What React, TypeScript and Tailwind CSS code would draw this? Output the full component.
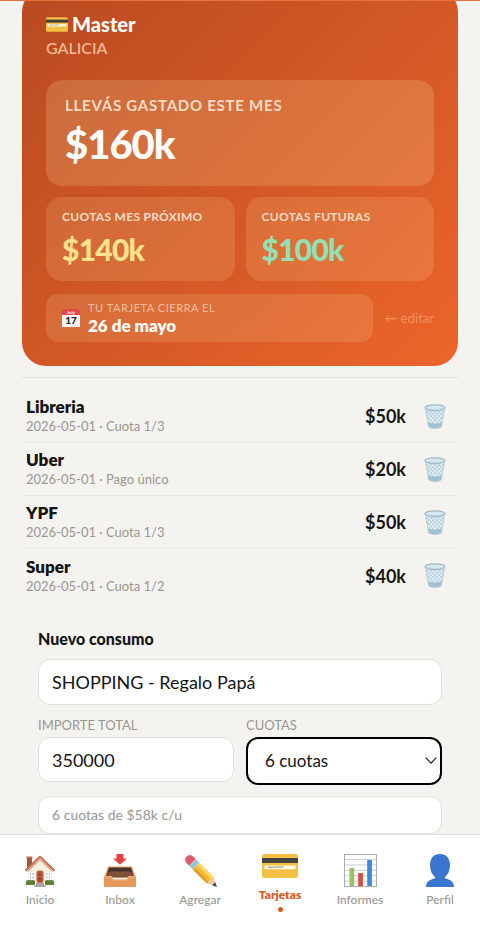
import { useState, type ReactNode } from "react";

function CardIcon({ className }: { className: string }) {
  return (
    <svg viewBox="0 0 36 24" className={className} aria-hidden="true">
      <rect width="36" height="24" rx="2.5" fill="#f2c043" />
      <rect y="4" width="36" height="5" fill="#45413c" />
      <rect x="2.5" y="11.5" width="31" height="3.8" fill="#fff8e3" />
      <path d="M6 14l2-1.5.8 1.5 2-1.2 1 .8 2-1 1 .9 2.200-.9 1.500.6 3-.4" fill="none" stroke="#4d473b" strokeWidth=".6" />
    </svg>
  );
}

function CalendarIcon() {
  return (
    <svg viewBox="0 0 18 18" className="size-[18px] shrink-0" aria-hidden="true">
      <rect width="18" height="18" rx="1" fill="#fbfaf8" />
      <path d="M1 0h16a1 1 0 0 1 1 1v5H0V1a1 1 0 0 1 1-1z" fill="#e5484a" />
      <text x="9" y="4.600" textAnchor="middle" fontSize="4.500" fontWeight="700" fill="#ffffff">July</text>
      <text x="9" y="15" textAnchor="middle" fontSize="10" fontWeight="900" fill="#1d1d1d">17</text>
    </svg>
  );
}

function TrashIcon() {
  return (
    <svg viewBox="0 0 22 25" className="h-[25px] w-[22px]" aria-hidden="true">
      <path d="M1.300 3.500L4.600 22.500Q5 24.300 11 24.300T17.400 22.500L20.700 3.500z" fill="#e4eff4" />
      <path d="M4 18.500q7 2.200 14 0l-.7 4q-.6 1.800-6.300 1.800t-6.400-1.800z" fill="#9fc1d1" />
      <path
        d="M2 7l14 14.500M3 12l9.500 11.500M4 17.500l6 6M4.500 6l13 12.500M8.500 6l10 9.500M12.500 6l7 6.500M16.500 6l3.500 3M20 7L6 21.500M19 12L9.500 23.500M18 17.500l-6 6M17.500 6l-13 12.500M13.500 6l-10 9.500M9.500 6l-7 6.500M5.500 6L2 9"
        stroke="#a5c2d0"
        strokeWidth=".7"
        fill="none"
      />
      <path d="M1.300 3.500L4.600 22.500Q5 24.300 11 24.300T17.400 22.500L20.700 3.500" fill="none" stroke="#a9c6d3" strokeWidth=".8" />
      <ellipse cx="11" cy="3.700" rx="10" ry="2.900" fill="#d8e8ef" stroke="#9dbccb" strokeWidth="1.200" />
      <path d="M3 4.500q8 2.500 16 0" stroke="#b6cfda" strokeWidth=".7" fill="none" />
    </svg>
  );
}

function HouseIcon() {
  return (
    <svg viewBox="0 0 32 33" className="h-[33px] w-8" aria-hidden="true">
      <path d="M3 3h5v12H3z" fill="#9c5a40" />
      <path d="M2.500 2.500h6v2h-6z" fill="#b66b4c" />
      <path d="M4 15L16 4l12 11v14H4z" fill="#f5efdd" />
      <path d="M1.500 16.800L16 2.800l14.500 14" fill="none" stroke="#d0694a" strokeWidth="2.200" strokeLinejoin="round" />
      <path d="M3.500 17.500L16 5.800l12.500 11.700" fill="none" stroke="#a94f38" strokeWidth=".7" />
      <rect x="12.500" y="16.500" width="7" height="12.500" rx="2.500" fill="#c65a41" />
      <path d="M14 19h4v3h-4zM14 23.500h4v4h-4z" fill="#a6452f" />
      <g fill="#9dccd6" stroke="#fff" strokeWidth=".8">
        <path d="M5.500 18.500h2.300v3.200H5.500zM7.800 18.500h2.300v3.200H7.800zM5.500 21.700h2.300v3.200H5.500zM7.800 21.700h2.300v3.200H7.800z" />
        <path d="M21.800 18.500h2.300v3.200h-2.300zM24.100 18.500h2.300v3.200h-2.300zM21.800 21.700h2.300v3.200h-2.300zM24.100 21.700h2.300v3.200h-2.300z" />
      </g>
      <path d="M2 27q2-1.500 4.500-.7 2-.8 4.500.4V31H2zM21 26.700q2.500-1.200 4.500-.4 2.500-.8 4.500.7v4h-9z" fill="#5f7d3a" />
      <path d="M12 28.500h8V31h1.500v2h-11v-2H12z" fill="#aaa39f" />
    </svg>
  );
}

function InboxIcon() {
  return (
    <svg viewBox="0 0 32 33" className="h-[33px] w-8" aria-hidden="true">
      <path d="M4 12.500h24l4 11H0z" fill="#e79a5c" />
      <path d="M5 13.500h22l2.800 9H2.200z" fill="#46322c" />
      <path d="M4 19.500l2-2h20l2 2 1 4H3z" fill="#815039" />
      <path d="M0 22.500h7.500l2 3h13l2-3H32V32q0 1-1 1H1q-1 0-1-1z" fill="#e5985c" />
      <path d="M.5 22.800h7l2 3h13l2-3h7" fill="none" stroke="#f5c58f" strokeWidth="1" />
      <path d="M12.500 0h7v4.500h3.500L16 10.800 9 4.500h3.500z" fill="#e5433f" />
    </svg>
  );
}

function PencilIcon() {
  return (
    <svg viewBox="0 0 33 33" className="size-[33px]" aria-hidden="true">
      <g transform="translate(3.600 3.600) rotate(45)">
        <path d="M4-4.700h3v9.400H4q-5.500 0-5.500-4.700T4-4.700z" fill="#df5b68" />
        <path d="M7-4.700h5v9.400H7z" fill="#9fd0de" />
        <path d="M8.500-4.700v9.400M10.500-4.700v9.400" stroke="#74adc0" strokeWidth=".7" />
        <path d="M12-4.700h20v9.400H12z" fill="#f3bd37" />
        <path d="M12-4.700h20v3H12z" fill="#fbd964" />
        <path d="M12 2h20v2.700H12z" fill="#e29b25" />
        <path d="M32-4.700L41 0l-9 4.700q-1.500-1.500 0-3-1.500-1.700 0-3.400-1.500-1.500 0-3z" fill="#eccb9d" />
        <path d="M37-2.100L41.500 0 37 2.100z" fill="#3f4246" />
      </g>
    </svg>
  );
}

function ChartIcon() {
  return (
    <svg viewBox="0 0 33 33" className="size-[33px]" aria-hidden="true">
      <rect x=".5" y=".5" width="32" height="32" fill="#fff" stroke="#a9adb3" />
      <path d="M1 5.500h31M1 10.900h31M1 16.300h31M1 21.700h31M1 27.100h31" stroke="#c6c9cd" strokeWidth=".9" />
      <path d="M5.500 14h4.700v18H5.500z" fill="#98c261" />
      <path d="M14.200 19h4.700v13h-4.700z" fill="#d84a45" />
      <path d="M23.200 6h4.700v26h-4.700z" fill="#3b8bdc" />
    </svg>
  );
}

function PersonIcon() {
  return (
    <svg viewBox="0 0 28 33" className="h-[33px] w-7" aria-hidden="true">
      <path d="M14 0c6.500 0 10 4.500 10 11 0 5.500-2 9.500-5 12v1.500c4 .7 9 2.500 9 8.500H0c0-6 5-7.800 9-8.500V23c-3-2.500-5-6.500-5-12C4 4.500 7.500 0 14 0z" fill="#3a76cf" />
    </svg>
  );
}

const purchases = [
  { name: "Libreria", detail: "2026-05-01 · Cuota 1/3", amount: "$50k" },
  { name: "Uber", detail: "2026-05-01 · Pago único", amount: "$20k" },
  { name: "YPF", detail: "2026-05-01 · Cuota 1/3", amount: "$50k" },
  { name: "Super", detail: "2026-05-01 · Cuota 1/2", amount: "$40k" },
];

const tabs: { label: string; icon: ReactNode; active?: boolean }[] = [
  { label: "Inicio", icon: <HouseIcon /> },
  { label: "Inbox", icon: <InboxIcon /> },
  { label: "Agregar", icon: <PencilIcon /> },
  { label: "Tarjetas", icon: <CardIcon className="h-6 w-9" />, active: true },
  { label: "Informes", icon: <ChartIcon /> },
  { label: "Perfil", icon: <PersonIcon /> },
];

function Stat({ label, value, color }: { label: string; value: string; color: string }) {
  return (
    <div className="flex-1 rounded-2xl bg-[#ffdf9f]/16 px-4 pt-3 pb-3">
      <p className="text-xs leading-4 font-bold tracking-wide text-[#fbdcc8]">{label}</p>
      <p className={`mt-1 text-[30px] leading-10 font-black tracking-tight ${color}`}>{value}</p>
    </div>
  );
}

export default function App() {
  const [concept, setConcept] = useState("SHOPPING - Regalo Papá");
  const [total, setTotal] = useState("350000");
  const [fees, setFees] = useState("6");

  return (
    <div className="flex h-screen flex-col bg-[#f5f3ef] font-[Lato,sans-serif] text-[#141414]">
      <header className="h-px shrink-0 bg-[#e8713c]" />
      <main className="min-h-0 flex-1 overflow-hidden px-[22px]">
        <section className="-mt-[13px] rounded-3xl bg-linear-135 from-[#b84a20] to-[#ec652b] p-6 text-white">
          <h1 className="flex items-center gap-1 text-xl leading-6 font-black">
            <CardIcon className="h-[15px] w-[22px]" />
            Master
          </h1>
          <p className="text-base leading-6 font-medium text-[#f5bd9d]">GALICIA</p>

          <div className="mt-5 rounded-2xl bg-[#ffdf9f]/20 px-[19px] pt-[15px] pb-4">
            <p className="text-[15px] leading-5 font-bold tracking-wider text-[#fbdcc8]">LLEVÁS GASTADO ESTE MES</p>
            <p className="mt-1 text-[40px] leading-[51px] font-black tracking-tight">$160k</p>
          </div>

          <div className="mt-[11px] flex gap-[11px]">
            <Stat label="CUOTAS MES PRÓXIMO" value="$140k" color="text-[#fbe28c]" />
            <Stat label="CUOTAS FUTURAS" value="$100k" color="text-[#92e1b5]" />
          </div>

          <div className="mt-[13px] flex items-center gap-3">
            <div className="flex h-12 flex-1 items-center gap-2 rounded-xl bg-[#ffdf9f]/16 px-4">
              <CalendarIcon />
              <div>
                <p className="text-[11px] leading-4 tracking-wider text-[#f5bd9d]">TU TARJETA CIERRA EL</p>
                <p className="text-[17px] leading-5 font-extrabold">26 de mayo</p>
              </div>
            </div>
            <button type="button" className="text-[13px] leading-5 text-[#f0915f]">← editar</button>
          </div>
        </section>

        <ul className="mt-[11px] border-t border-[#e5e3de] pt-3">
          {purchases.map((p) => (
            <li key={p.name} className="flex h-[53px] items-center border-b border-[#eceae6] pr-3 pl-1 last:border-0">
              <div className="flex-1">
                <p className="text-[17px] leading-5 font-extrabold">{p.name}</p>
                <p className="text-[13px] leading-[18px] text-[#999792]">{p.detail}</p>
              </div>
              <p className="text-lg leading-6 font-bold">{p.amount}</p>
              <button type="button" aria-label={`Eliminar ${p.name}`} className="ml-[18px]">
                <TrashIcon />
              </button>
            </li>
          ))}
        </ul>

        <form className="mt-[25px] px-4">
          <h2 className="text-base leading-6 font-black">Nuevo consumo</h2>
          <input
            aria-label="Concepto"
            value={concept}
            onChange={(e) => setConcept(e.target.value)}
            className="mt-2 block h-[46px] w-full rounded-xl border border-[#e2e0db] bg-white px-[13px] text-lg"
          />
          <div className="mt-2 flex items-start gap-3">
            <div className="min-w-0 flex-1">
              <label htmlFor="total" className="block text-[13px] leading-6 text-[#999792]">IMPORTE TOTAL</label>
              <input
                id="total"
                value={total}
                onChange={(e) => setTotal(e.target.value)}
                className="block h-[45px] w-full rounded-xl border border-[#e2e0db] bg-white px-[13px] text-lg"
              />
            </div>
            <div className="min-w-0 flex-1">
              <label htmlFor="fees" className="block text-[13px] leading-6 text-[#999792]">CUOTAS</label>
              <div className="relative">
                <select
                  id="fees"
                  value={fees}
                  onChange={(e) => setFees(e.target.value)}
                  className="block h-12 w-full appearance-none rounded-xl border-2 border-black bg-white px-[17px] text-[17px]"
                >
                  <option value="1">1 cuota</option>
                  <option value="3">3 cuotas</option>
                  <option value="6">6 cuotas</option>
                </select>
                <svg viewBox="0 0 12 7" className="pointer-events-none absolute top-5 right-[5px] h-[7px] w-3" aria-hidden="true">
                  <path d="M.6.6L6 6.200 11.400.6" fill="none" stroke="#222" strokeWidth="1.200" />
                </svg>
              </div>
            </div>
          </div>
          <p className="mt-[11px] rounded-xl border border-[#e2e0db] bg-white px-[13px] py-2 text-sm leading-5 text-[#999792]">
            6 cuotas de $58k c/u
          </p>
        </form>
      </main>

      <nav className="flex h-[108px] shrink-0 items-start border-t border-[#e2e0db] bg-white pt-[19px]">
        {tabs.map((t) => (
          <a
            key={t.label}
            href="#"
            aria-current={t.active ? "page" : undefined}
            className={`flex flex-1 flex-col items-center text-xs leading-4 ${t.active ? "font-extrabold text-[#d9592a]" : "font-medium text-[#999792]"}`}
          >
            {t.icon}
            <span className={t.active ? "mt-[9px]" : "mt-[5px]"}>{t.label}</span>
            {t.active && <span className="mt-1 size-[5px] rounded-full bg-[#d9592a]" />}
          </a>
        ))}
      </nav>
    </div>
  );
}
